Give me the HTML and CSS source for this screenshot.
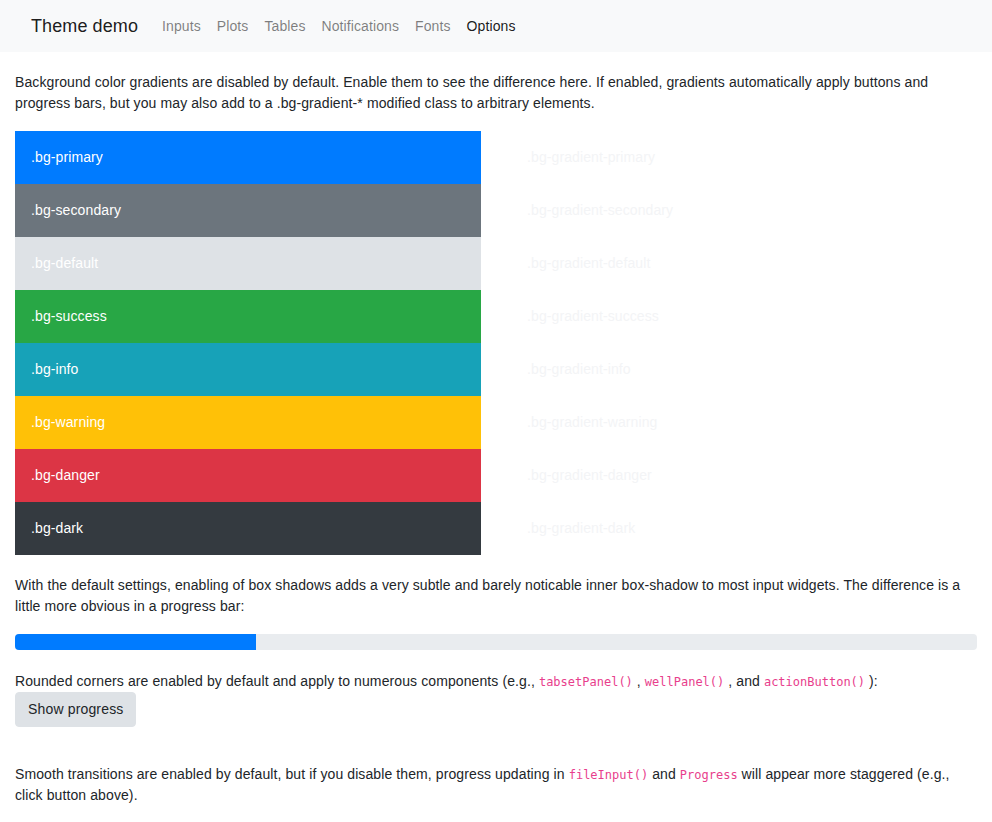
FILE: index.html
```html
<!DOCTYPE html>
<html lang="en">
<head>
<meta charset="utf-8">
<title>Theme demo</title>
<link rel="stylesheet" href="styles.css">
</head>
<body>
<nav class="navbar">
  <span class="brand">Theme demo</span>
  <ul class="nav">
    <li><a class="nav-link">Inputs</a></li>
    <li><a class="nav-link">Plots</a></li>
    <li><a class="nav-link">Tables</a></li>
    <li><a class="nav-link">Notifications</a></li>
    <li><a class="nav-link">Fonts</a></li>
    <li><a class="nav-link active">Options</a></li>
  </ul>
</nav>
<main class="container">
  <p class="p-intro">Background color gradients are disabled by default. Enable them to see the difference here. If enabled, gradients automatically apply buttons and progress bars, but you may also add to a .bg-gradient-* modified class to arbitrary elements.</p>
  <div class="swatches">
    <div class="swatch-col">
      <div class="swatch bg-primary">.bg-primary</div>
      <div class="swatch bg-secondary">.bg-secondary</div>
      <div class="swatch bg-default">.bg-default</div>
      <div class="swatch bg-success">.bg-success</div>
      <div class="swatch bg-info">.bg-info</div>
      <div class="swatch bg-warning">.bg-warning</div>
      <div class="swatch bg-danger">.bg-danger</div>
      <div class="swatch bg-dark">.bg-dark</div>
    </div>
    <div class="swatch-col">
      <div class="swatch gradient">.bg-gradient-primary</div>
      <div class="swatch gradient">.bg-gradient-secondary</div>
      <div class="swatch gradient">.bg-gradient-default</div>
      <div class="swatch gradient">.bg-gradient-success</div>
      <div class="swatch gradient">.bg-gradient-info</div>
      <div class="swatch gradient">.bg-gradient-warning</div>
      <div class="swatch gradient">.bg-gradient-danger</div>
      <div class="swatch gradient">.bg-gradient-dark</div>
    </div>
  </div>
  <p class="p-shadow">With the default settings, enabling of box shadows adds a very subtle and barely noticable inner box-shadow to most input widgets. The difference is a little more obvious in a progress bar:</p>
  <div class="progress"><div class="progress-bar" style="width: 25%"></div></div>
  <p class="p-rounded">Rounded corners are enabled by default and apply to numerous components (e.g., <code>tabsetPanel()</code> , <code>wellPanel()</code> , and <code>actionButton()</code> ):</p>
  <button class="btn">Show progress</button>
  <p class="p-smooth">Smooth transitions are enabled by default, but if you disable them, progress updating in <code>fileInput()</code> and <code>Progress</code> will appear more staggered (e.g., click button above).</p>
</main>
</body>
</html>
```
FILE: styles.css
```css
* { box-sizing: border-box; }

body {
  margin: 0;
  font-family: "Liberation Sans", Arial, sans-serif;
  font-size: 14px;
  line-height: 1.5;
  letter-spacing: 0.1px;
  color: #212529;
  background: #fff;
}

.navbar {
  display: flex;
  align-items: center;
  background: #f8f9fa;
  padding: 8px 31px;
  height: 52px;
}

.brand {
  font-size: 18px;
  line-height: 27px;
  letter-spacing: 0.1px;
  color: rgba(0, 0, 0, 0.9);
  margin-right: 16px;
}

.nav {
  display: flex;
  list-style: none;
  margin: 0;
  padding: 0;
}

.nav-link {
  display: block;
  padding: 7px 8px;
  color: rgba(0, 0, 0, 0.5);
  text-decoration: none;
}

.nav-link.active { color: rgba(0, 0, 0, 0.9); }

.container {
  padding: 0 15px;
}

p { margin: 0; }

.p-intro { margin-top: 20px; margin-bottom: 17px; }

.swatches {
  display: grid;
  grid-template-columns: 1fr 1fr;
  column-gap: 30px;
}

.swatch {
  padding: 16px;
  height: 53px;
  color: #fff;
}

.swatch.gradient { color: #f3f4f6; }

.bg-primary { background: #007bff; }
.bg-secondary { background: #6c757d; }
.bg-default { background: #dee2e6; }
.bg-success { background: #28a745; }
.bg-info { background: #17a2b8; }
.bg-warning { background: #ffc107; }
.bg-danger { background: #dc3545; }
.bg-dark { background: #343a40; }

.p-shadow { margin-top: 20px; margin-bottom: 17px; }

.progress {
  height: 16px;
  background: #e9ecef;
  border-radius: 4px;
  overflow: hidden;
  display: flex;
}

.progress-bar { background: #007bff; height: 100%; }

.p-rounded { margin-top: 21px; }

code {
  font-family: "DejaVu Sans Mono", "Liberation Mono", monospace;
  font-size: 12px;
  letter-spacing: 0;
  color: #e83e8c;
}

.btn {
  display: block;
  font-family: inherit;
  font-size: 14px;
  line-height: 21px;
  letter-spacing: 0.16px;
  padding: 6px 12px;
  color: #212529;
  background: #dee2e6;
  border: 1px solid #dee2e6;
  border-radius: 4px;
}

.p-smooth { margin-top: 37px; }
```
